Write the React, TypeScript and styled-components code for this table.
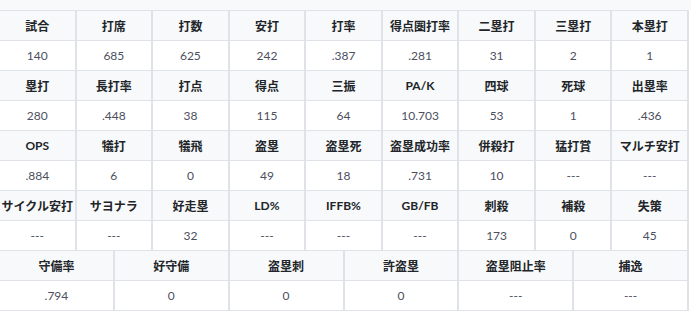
import React from "react";
import styled, { createGlobalStyle } from "styled-components";

type Stat = { label: string; value: string };

const GROUP_A: Stat[][] = [
  [
    { label: "試合", value: "140" },
    { label: "打席", value: "685" },
    { label: "打数", value: "625" },
    { label: "安打", value: "242" },
    { label: "打率", value: ".387" },
    { label: "得点圏打率", value: ".281" },
    { label: "二塁打", value: "31" },
    { label: "三塁打", value: "2" },
    { label: "本塁打", value: "1" },
  ],
  [
    { label: "塁打", value: "280" },
    { label: "長打率", value: ".448" },
    { label: "打点", value: "38" },
    { label: "得点", value: "115" },
    { label: "三振", value: "64" },
    { label: "PA/K", value: "10.703" },
    { label: "四球", value: "53" },
    { label: "死球", value: "1" },
    { label: "出塁率", value: ".436" },
  ],
  [
    { label: "OPS", value: ".884" },
    { label: "犠打", value: "6" },
    { label: "犠飛", value: "0" },
    { label: "盗塁", value: "49" },
    { label: "盗塁死", value: "18" },
    { label: "盗塁成功率", value: ".731" },
    { label: "併殺打", value: "10" },
    { label: "猛打賞", value: "---" },
    { label: "マルチ安打", value: "---" },
  ],
  [
    { label: "サイクル安打", value: "---" },
    { label: "サヨナラ", value: "---" },
    { label: "好走塁", value: "32" },
    { label: "LD%", value: "---" },
    { label: "IFFB%", value: "---" },
    { label: "GB/FB", value: "---" },
    { label: "刺殺", value: "173" },
    { label: "補殺", value: "0" },
    { label: "失策", value: "45" },
  ],
];

const GROUP_B: Stat[] = [
  { label: "守備率", value: ".794" },
  { label: "好守備", value: "0" },
  { label: "盗塁刺", value: "0" },
  { label: "許盗塁", value: "0" },
  { label: "盗塁阻止率", value: "---" },
  { label: "捕逸", value: "---" },
];

const GlobalStyle = createGlobalStyle`
  html, body {
    margin: 0;
    padding: 0;
    background: #ffffff;
  }
  body {
    font-family: Lato, "Noto Sans CJK JP", sans-serif;
  }
`;

const Page = styled.div`
  width: 691px;
  display: flex;
  flex-direction: column;
`;

// 上に続く表の一部が見えている帯
const TopStrip = styled.div`
  height: 10px;
  background: #f8f9fa;
`;

const StatGrid = styled.div<{ $cols: number; $top: boolean }>`
  width: 689px;
  box-sizing: border-box;
  display: grid;
  grid-template-columns: repeat(${(p) => p.$cols}, 1fr);
  column-gap: 2px;
  row-gap: 1px;
  padding: ${(p) => (p.$top ? "1px" : "0")} 2px 1px 0;
  background: #dfe2e6;
`;

const HeadCell = styled.div`
  height: 29px;
  display: flex;
  align-items: center;
  justify-content: center;
  background: #f8f9fa;
  color: #212529;
  font-size: 12px;
  font-weight: 700;
  white-space: nowrap;
`;

const ValueCell = styled.div`
  height: 29px;
  display: flex;
  align-items: center;
  justify-content: center;
  background: #ffffff;
  color: #4c4f5e;
  font-size: 12px;
  white-space: nowrap;
`;

function StatRows({ rows, cols, top }: { rows: Stat[][]; cols: number; top: boolean }) {
  return (
    <StatGrid $cols={cols} $top={top}>
      {rows.map((row, i) => (
        <React.Fragment key={i}>
          {row.map((s) => (
            <HeadCell key={"h" + s.label}>{s.label}</HeadCell>
          ))}
          {row.map((s) => (
            <ValueCell key={"v" + s.label}>{s.value}</ValueCell>
          ))}
        </React.Fragment>
      ))}
    </StatGrid>
  );
}

export default function App() {
  return (
    <Page>
      <GlobalStyle />
      <TopStrip />
      <StatRows rows={GROUP_A} cols={9} top />
      <StatRows rows={[GROUP_B]} cols={6} top={false} />
    </Page>
  );
}
